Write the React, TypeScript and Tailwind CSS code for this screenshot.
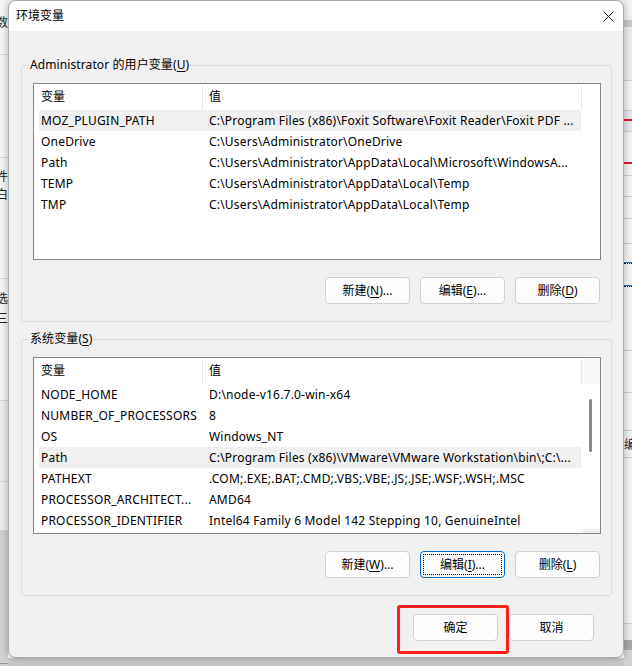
import React from "react";

const F = "font-['Noto_Sans','Noto_Sans_CJK_SC',sans-serif]";

type Row = { n: string; v: string; hl?: boolean };

const userVars: Row[] = [
  { n: "MOZ_PLUGIN_PATH", v: "C:\\Program Files (x86)\\Foxit Software\\Foxit Reader\\Foxit PDF ...", hl: true },
  { n: "OneDrive", v: "C:\\Users\\Administrator\\OneDrive" },
  { n: "Path", v: "C:\\Users\\Administrator\\AppData\\Local\\Microsoft\\WindowsA..." },
  { n: "TEMP", v: "C:\\Users\\Administrator\\AppData\\Local\\Temp" },
  { n: "TMP", v: "C:\\Users\\Administrator\\AppData\\Local\\Temp" },
];

const sysVars: Row[] = [
  { n: "NODE_HOME", v: "D:\\node-v16.7.0-win-x64" },
  { n: "NUMBER_OF_PROCESSORS", v: "8" },
  { n: "OS", v: "Windows_NT" },
  { n: "Path", v: "C:\\Program Files (x86)\\VMware\\VMware Workstation\\bin\\;C:\\...", hl: true },
  { n: "PATHEXT", v: ".COM;.EXE;.BAT;.CMD;.VBS;.VBE;.JS;.JSE;.WSF;.WSH;.MSC" },
  { n: "PROCESSOR_ARCHITECT...", v: "AMD64" },
  { n: "PROCESSOR_IDENTIFIER", v: "Intel64 Family 6 Model 142 Stepping 10, GenuineIntel" },
];

function Key({ k }: { k: string }) {
  return (
    <>
      (<span className="underline underline-offset-[2px]">{k}</span>)
    </>
  );
}

function Btn({ children, focus }: { children: React.ReactNode; focus?: boolean }) {
  if (focus) {
    return (
      <div className="w-[85px] h-[27px] rounded-[4px] border border-[#0067c0] bg-[#fdfdfd] p-[2px] flex">
        <div className="flex-1 flex items-center justify-center border border-dotted border-black text-[12px] text-black">
          {children}
        </div>
      </div>
    );
  }
  return (
    <div className="w-[85px] h-[27px] rounded-[4px] border border-[#d0d0d0] bg-[#fdfdfd] flex items-center justify-center text-[12px] text-black">
      {children}
    </div>
  );
}

function List({ rows, scroll }: { rows: Row[]; scroll?: boolean }) {
  return (
    <div className="h-[177px] border border-[#868686] bg-white flex overflow-hidden">
      <div className="w-[548px] flex flex-col">
        <div className="h-[26px] flex text-[12px] text-black">
          <div className="w-[169px] flex justify-between">
            <span className="pl-[7px] self-center">变量</span>
            <div className="w-px mt-[2px] bg-[#e5e5e5]" />
          </div>
          <div className="w-[379px] flex justify-between">
            <span className="pl-[6px] self-center">值</span>
            <div className="w-px mt-[2px] bg-[#e5e5e5]" />
          </div>
        </div>
        <div className="ml-[5px] w-[542px] flex flex-col">
          {rows.map((r, i) => (
            <div
              key={i}
              className={`h-[21px] flex items-center text-[12px] tracking-[0.2px] text-black ${r.hl ? "bg-[#f0f0f0]" : ""}`}
            >
              <div className="w-[170px] pl-[2px] whitespace-nowrap overflow-hidden">{r.n}</div>
              <div className="flex-1 whitespace-nowrap overflow-hidden">{r.v}</div>
            </div>
          ))}
        </div>
      </div>
      <div className="flex-1 flex flex-col">
        {scroll ? (
          <>
            <div className="h-[26px] bg-[#fafafa]" />
            <div className="pt-[15px] pl-[7px]">
              <div className="w-[3px] h-[53px] rounded-full bg-[#8a8a8a]" />
            </div>
            <div className="flex-1" />
            <div className="h-[4px] bg-[#f0f0f0]" />
          </>
        ) : null}
      </div>
    </div>
  );
}

function Group({ label, rows, scroll, btns }: { label: React.ReactNode; rows: Row[]; scroll?: boolean; btns: React.ReactNode }) {
  return (
    <div className="h-[257px] border border-[#dcdcdc] rounded-[3px] flex flex-col pl-[11px] pr-[10px]">
      <div className="h-0 -ml-[4px]">
        <div className="w-fit -mt-[10px] px-[1px] bg-[#f0f0f0] text-[12px] tracking-[0.1px] text-black leading-[18px] whitespace-nowrap">
          {label}
        </div>
      </div>
      <div className="pt-[17px]">
        <List rows={rows} scroll={scroll} />
      </div>
      <div className="mt-[17px] flex justify-end gap-[10px] mr-[1px]">{btns}</div>
    </div>
  );
}

function Seg({ h, cls, children }: { h: number; cls: string; children?: React.ReactNode }) {
  return (
    <div className={`${cls} overflow-hidden`} style={{ height: h }}>
      {children}
    </div>
  );
}

export default function App() {
  return (
    <div className={`${F} w-[632px] h-[666px] flex bg-[#f3f3f3] overflow-hidden`}>
      {/* left background strip */}
      <div className="w-[8px] flex flex-col">
        <Seg h={54} cls="bg-[#f5f5f5] flex justify-end pt-[15px] text-[12px] leading-[16px] text-[#222]">
          <span className="shrink-0 whitespace-nowrap">数</span>
        </Seg>
        <Seg h={1} cls="bg-[#d6d6d6]" />
        <Seg h={102} cls="bg-[#f5f5f5]" />
        <Seg h={1} cls="bg-[#d6d6d6]" />
        <Seg h={120} cls="bg-[#f5f5f5] flex flex-col items-end pt-[10px] text-[12px] leading-[18px] text-[#222]">
          <span className="shrink-0 whitespace-nowrap">文件</span>
          <span className="shrink-0 whitespace-nowrap">白</span>
        </Seg>
        <Seg h={1} cls="bg-[#d6d6d6]" />
        <Seg h={121} cls="bg-[#f5f5f5] flex flex-col items-end pt-[10px] text-[12px] leading-[20px] text-[#222]">
          <span className="shrink-0 whitespace-nowrap">选</span>
          <span className="shrink-0 whitespace-nowrap">三</span>
        </Seg>
        <Seg h={1} cls="bg-[#d6d6d6]" />
        <Seg h={80} cls="bg-[#ececec]" />
        <Seg h={1} cls="bg-[#d6d6d6]" />
        <Seg h={48} cls="bg-[#ececec]" />
        <Seg h={133} cls="bg-[#d2d2d2]" />
        <Seg h={1} cls="bg-[#9a9a9a]" />
        <Seg h={2} cls="bg-[#d2d2d2]" />
      </div>

      {/* middle column: dialog + area below */}
      <div className="w-[616px] flex flex-col">
        <div className="relative z-10 h-[658px] rounded-[8px] border border-[#a9a9a9] bg-[#f0f0f0] shadow-[0_0_8px_rgba(0,0,0,0.28)] flex flex-col overflow-hidden">
          {/* title bar */}
          <div className="h-[30px] bg-white flex items-center justify-between pl-[7px] pr-[9px]">
            <span className="text-[12px] text-black">环境变量</span>
            <svg width="11" height="11" viewBox="0 0 11 11">
              <path d="M0.5 0.5 L10.5 10.5 M10.5 0.5 L0.5 10.5" stroke="#1a1a1a" strokeWidth="1" fill="none" />
            </svg>
          </div>
          {/* body */}
          <div className="flex-1 flex flex-col pt-[34px] pl-[12px] pr-[11px]">
            <Group
              label={<>Administrator 的用户变量<Key k="U" /></>}
              rows={userVars}
              btns={
                <>
                  <Btn>新建<Key k="N" />...</Btn>
                  <Btn>编辑<Key k="E" />...</Btn>
                  <Btn>删除<Key k="D" /></Btn>
                </>
              }
            />
            <div className="mt-[17px]">
              <Group
                label={<>系统变量<Key k="S" /></>}
                rows={sysVars}
                scroll
                btns={
                  <>
                    <Btn>新建<Key k="W" />...</Btn>
                    <Btn focus>编辑<Key k="I" />...</Btn>
                    <Btn>删除<Key k="L" /></Btn>
                  </>
                }
              />
            </div>
            <div className="mt-[18px] flex justify-end gap-[11px] pr-[18px]">
              <div className="relative">
                <Btn>确定</Btn>
                <div className="absolute left-[-16px] top-[-9px] w-[112px] h-[49px] border-[3px] border-[#fb1f1f] rounded-[3px]" />
              </div>
              <Btn>取消</Btn>
            </div>
          </div>
        </div>
        <div className="flex-1 bg-[#c9c9c9]" />
      </div>

      {/* right background strip */}
      <div className="w-[8px] flex flex-col">
        <Seg h={20} cls="bg-[#f3f3f3]" />
        <Seg h={7} cls="bg-[#c9c9c9]" />
        <Seg h={53} cls="bg-[#ededed]" />
        <Seg h={1} cls="bg-[#cfcfcf]" />
        <Seg h={29} cls="bg-[#f3f3f3]" />
        <Seg h={1} cls="bg-[#cfcfcf]" />
        <Seg h={8} cls="bg-[#e8e8e8]" />
        <Seg h={2} cls="bg-[#e81123]" />
        <Seg h={10} cls="bg-[#e8e8e8]" />
        <Seg h={1} cls="bg-[#cfcfcf]" />
        <Seg h={30} cls="bg-[#f3f3f3]" />
        <Seg h={2} cls="bg-[#e81123]" />
        <Seg h={11} cls="bg-[#f3f3f3]" />
        <Seg h={1} cls="bg-[#cfcfcf]" />
        <Seg h={20} cls="bg-[#f3f3f3]" />
        <Seg h={1} cls="bg-[#cfcfcf]" />
        <Seg h={21} cls="bg-[#f3f3f3]" />
        <Seg h={1} cls="bg-[#cfcfcf]" />
        <Seg h={24} cls="bg-[#f3f3f3]" />
        <Seg h={1} cls="bg-[#cfcfcf]" />
        <Seg h={18} cls="bg-[#f3f3f3]" />
        <Seg h={1} cls="bg-[#0078d4]" />
        <Seg h={1} cls="border-t border-dotted border-black" />
        <Seg h={21} cls="bg-[#f3f3f3]" />
        <Seg h={1} cls="bg-[#0078d4]" />
        <Seg h={1} cls="border-t border-dotted border-black" />
        <Seg h={63} cls="bg-[#f3f3f3]" />
        <Seg h={1} cls="bg-[#cfcfcf]" />
        <Seg h={41} cls="bg-[#f3f3f3]" />
        <Seg h={1} cls="bg-[#cfcfcf]" />
        <Seg h={37} cls="bg-[#f3f3f3]" />
        <Seg h={1} cls="bg-[#cfcfcf]" />
        <Seg h={26} cls="bg-[#f3f3f3] text-[12px] leading-[14px] pt-[7px] text-[#222]">
          <span className="block w-[14px] whitespace-nowrap">编</span>
        </Seg>
        <Seg h={1} cls="bg-[#cfcfcf]" />
        <Seg h={165} cls="bg-[#f3f3f3]" />
        <Seg h={1} cls="bg-[#cfcfcf]" />
        <Seg h={16} cls="bg-[#ececec]" />
        <Seg h={10} cls="bg-[#a8a8a8]" />
        <Seg h={16} cls="bg-[#d2d2d2]" />
      </div>
    </div>
  );
}
